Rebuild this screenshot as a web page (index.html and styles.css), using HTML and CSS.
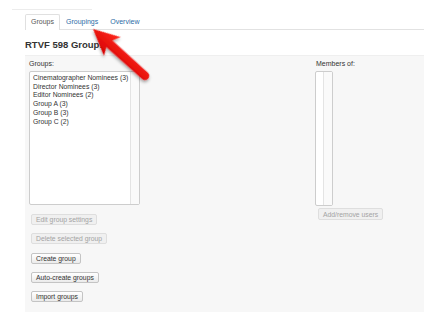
FILE: index.html
```html
<!DOCTYPE html>
<html lang="en">
<head>
    <meta charset="UTF-8">
    <meta name="viewport" content="width=device-width, initial-scale=1.0">
    <title>RTVF 598 Groups</title>
    <link rel="stylesheet" href="styles.css">
</head>
<body>

    <div class="topline"></div>

    <div class="main">
        <!-- Tabs -->
        <ul class="tabs">
            <li class="tab active">Groups</li>
            <li class="tab"><a href="#">Groupings</a></li>
            <li class="tab"><a href="#">Overview</a></li>
        </ul>

        <h2 class="title">RTVF 598 Groups</h2>

        <div class="panel">
            <!-- Groups column -->
            <div class="groups-col">
                <label>Groups:</label>
                <div class="listbox">
                    <ul class="options">
                        <li>Cinematographer Nominees (3)</li>
                        <li>Director Nominees (3)</li>
                        <li>Editor Nominees (2)</li>
                        <li>Group A (3)</li>
                        <li>Group B (3)</li>
                        <li>Group C (2)</li>
                    </ul>
                    <div class="scroll"></div>
                </div>

                <div class="actions">
                    <button class="btn" disabled>Edit group settings</button>
                    <button class="btn" disabled>Delete selected group</button>
                    <button class="btn">Create group</button>
                    <button class="btn">Auto-create groups</button>
                    <button class="btn">Import groups</button>
                </div>
            </div>

            <!-- Members column -->
            <div class="members-col">
                <label>Members of:</label>
                <div class="listbox small">
                    <div class="scroll"></div>
                </div>
                <button class="btn add" disabled>Add/remove users</button>
            </div>
        </div>
    </div>

    <!-- annotation arrow -->
    <svg class="arrow" width="442" height="322" viewBox="0 0 442 322">
        <defs>
            <linearGradient id="red" x1="0" y1="-12" x2="0" y2="12" gradientUnits="userSpaceOnUse">
                <stop offset="0" stop-color="#ff2a1f"/>
                <stop offset="1" stop-color="#d60000"/>
            </linearGradient>
            <filter id="shadow" x="-20%" y="-40%" width="140%" height="180%">
                <feDropShadow dx="1.2" dy="1.8" stdDeviation="1.4" flood-color="#000" flood-opacity="0.35"/>
            </filter>
        </defs>
        <g transform="translate(93 29) rotate(42)" filter="url(#shadow)">
            <path d="M0 0 L26 -12.5 L22 -4.4 L70 -4.2 A4.2 4.2 0 0 1 70 4.2 L22 4.4 L26 12.5 Z" fill="url(#red)"/>
        </g>
    </svg>

</body>
</html>
```

FILE: styles.css
```css
body {
    margin: 0;
    padding-top: 9px;
    font-family: "Liberation Sans", Arial, sans-serif;
    font-size: 7px;
    color: #333;
    background: #fff;
}

.topline {
    margin-left: 12px;
    width: 80px;
    height: 1px;
    background: #ececec;
}

.main {
    margin-left: 25px;
    width: 399px;
}

.tabs {
    list-style: none;
    margin: 4px 0 0;
    padding: 0;
    display: flex;
    border-bottom: 1px solid #e2e2e2;
}

.tab {
    line-height: 14px;
    padding: 0 5px;
    border: 1px solid transparent;
    border-bottom: none;
    margin-bottom: -1px;
    border-radius: 2px 2px 0 0;
}

.tab a {
    color: #2c6ca6;
    text-decoration: none;
}

.tab.active {
    background: #fff;
    border-color: #e0e0e0;
    color: #555;
    height: 15px;
}

.title {
    margin: 9px 0 4px;
    font-size: 9.5px;
    line-height: 12px;
    font-weight: bold;
    color: #333;
}

.panel {
    background: #f7f7f7;
    border-top: 1px solid #efefef;
    padding: 3px 4px 10px;
    display: grid;
    grid-template-columns: 286px auto;
    align-items: start;
}

label {
    display: block;
    line-height: 10px;
    color: #333;
}

.listbox {
    margin-top: 2px;
    width: 109px;
    height: 132px;
    border: 1px solid #cdcdcd;
    border-radius: 2px;
    background: #fff;
    display: flex;
}

.options {
    list-style: none;
    margin: 0;
    padding: 2px 0 0 3px;
    flex: 1;
    line-height: 8.7px;
    font-size: 6.8px;
    color: #333;
}

.scroll {
    width: 8px;
    border-left: 1px solid #e4e4e4;
    background: #fafafa;
}

.listbox.small {
    width: 16px;
    height: 133px;
}

.listbox.small::before {
    content: "";
    flex: 1;
}

.members-col label {
    padding-left: 1px;
}

.actions {
    display: flex;
    flex-direction: column;
    align-items: flex-start;
    gap: 8.25px;
    margin-top: 9px;
    margin-left: 2px;
}

.btn {
    height: 11px;
    padding: 0 4px;
    font-family: "Liberation Sans", Arial, sans-serif;
    font-size: 6.8px;
    line-height: 9px;
    color: #333;
    background: linear-gradient(#ffffff, #ebebeb);
    border: 1px solid #c4c4c4;
    border-radius: 2px;
    cursor: pointer;
}

.btn:disabled {
    color: #a3a3a3;
    background: #f0f0f0;
    border-color: #dedede;
    cursor: default;
}

.btn.add {
    height: 12px;
    margin: 2px 0 0 3px;
}

.arrow {
    position: absolute;
    top: 0;
    left: 0;
    pointer-events: none;
}
```
